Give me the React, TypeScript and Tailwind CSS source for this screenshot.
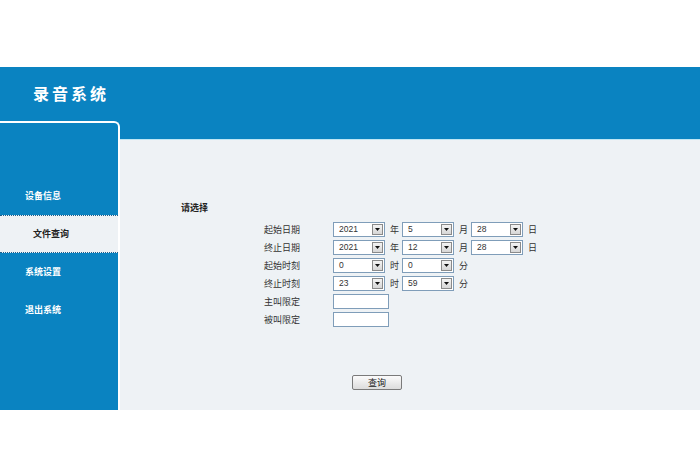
import React from "react";

const CJK = "font-['Noto_Sans_CJK_SC',sans-serif]";

function Select({ value, width = "w-[52px]" }: { value: string; width?: string }) {
  return (
    <div className={`flex h-[15px] ${width} items-center justify-between border border-[#7f9db9] bg-white pl-[5px] pr-[1px]`}>
      <span className="font-['Liberation_Sans',sans-serif] text-[8.5px] leading-none text-[#333]">{value}</span>
      <span className="flex h-[11px] w-[11px] items-center justify-center border border-[#8a8a8a] bg-[linear-gradient(#f4f4f4,#d6d6d6)]">
        <svg width="5" height="3" viewBox="0 0 5 3">
          <path d="M0 0h5L2.5 3z" fill="#111" />
        </svg>
      </span>
    </div>
  );
}

function Unit({ children }: { children: React.ReactNode }) {
  return <span className="w-[17px] pl-[5px] text-[9px] leading-none text-[#333]">{children}</span>;
}

function Row({ label, children }: { label: string; children: React.ReactNode }) {
  return (
    <div className="flex h-[18px] items-center">
      <span className="w-[69px] text-[9px] leading-none text-[#333]">{label}</span>
      {children}
    </div>
  );
}

const menu = [
  { label: "设备信息", active: false },
  { label: "文件查询", active: true },
  { label: "系统设置", active: false },
  { label: "退出系统", active: false },
];

export default function App() {
  return (
    <div className={`flex h-[464px] w-[700px] flex-col bg-white ${CJK}`}>
      <div className="h-[67px]" />
      <div className="flex h-[343px] bg-[#0a83c1]">
        <div className="flex w-[120px] flex-col">
          <div className="flex h-[54px] items-center pb-[2px] pl-[33px]">
            <span className="text-[16px] font-bold tracking-[3px] text-white">录音系统</span>
          </div>
          <nav className="flex-1 rounded-tr-[6px] border-t-2 border-r-2 border-white pt-[54px]">
            {menu.map((m) =>
              m.active ? (
                <div
                  key={m.label}
                  className="flex h-[38px] items-center border-y border-dotted border-[#1d5f8c] bg-[#eef2f5] pl-[33px] text-[9px] font-bold text-[#222]"
                >
                  {m.label}
                </div>
              ) : (
                <div key={m.label} className="flex h-[38px] items-center pl-[25px] text-[9px] font-bold text-white">
                  {m.label}
                </div>
              )
            )}
          </nav>
        </div>
        <div className="flex flex-1 flex-col">
          <div className="h-[72px]" />
          <div className="h-px bg-[#bfe6f4]" />
          <div className="flex flex-1 flex-col bg-[#eef2f5] pl-[61px] pt-[62px]">
            <span className="text-[9px] font-bold leading-[12px] text-[#222]">请选择</span>
            <div className="ml-[83px] mt-[6px] flex flex-col">
              <Row label="起始日期">
                <Select value="2021" />
                <Unit>年</Unit>
                <Select value="5" />
                <Unit>月</Unit>
                <Select value="28" />
                <Unit>日</Unit>
              </Row>
              <Row label="终止日期">
                <Select value="2021" />
                <Unit>年</Unit>
                <Select value="12" />
                <Unit>月</Unit>
                <Select value="28" />
                <Unit>日</Unit>
              </Row>
              <Row label="起始时刻">
                <Select value="0" />
                <Unit>时</Unit>
                <Select value="0" />
                <Unit>分</Unit>
              </Row>
              <Row label="终止时刻">
                <Select value="23" />
                <Unit>时</Unit>
                <Select value="59" />
                <Unit>分</Unit>
              </Row>
              <Row label="主叫限定">
                <div className="h-[15px] w-[56px] border border-[#7f9db9] bg-white" />
              </Row>
              <Row label="被叫限定">
                <div className="h-[15px] w-[56px] border border-[#7f9db9] bg-white" />
              </Row>
            </div>
            <div className="ml-[171px] mt-[47px]">
              <button
                type="button"
                className="flex h-[15px] w-[50px] items-center justify-center rounded-[2px] border border-[#7a7a7a] bg-[linear-gradient(#fbfbfb,#dcdcdc)] text-[9px] leading-none text-[#222]"
              >
                查询
              </button>
            </div>
          </div>
        </div>
      </div>
    </div>
  );
}
